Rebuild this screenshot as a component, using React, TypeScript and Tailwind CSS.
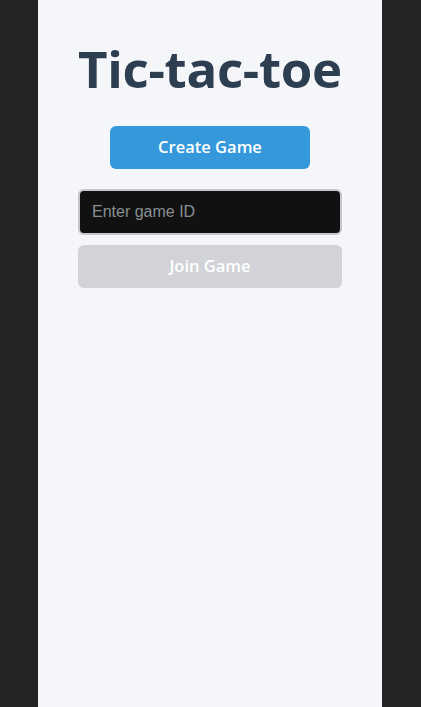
export default function App() {
  return (
    <div className="min-h-screen bg-[#242424] flex">
      <div
        className="ml-[38px] w-[344px] min-h-screen bg-[#f5f6fa] px-10 flex flex-col items-center"
        style={{ fontFamily: '"Open Sans", "Noto Sans", sans-serif' }}
      >
        <h1 className="mt-[38px] whitespace-nowrap text-[51px] leading-[60px] font-bold text-[#2c3e50] tracking-[-0.3px]">
          Tic-tac-toe
        </h1>
        <button className="mt-[28px] w-[200px] h-[43px] rounded-md bg-[#3498db] text-white text-[16.5px] font-semibold">
          Create Game
        </button>
        <input
          placeholder="Enter game ID"
          className="mt-5 w-full h-[46px] rounded-md border-2 border-[#c4c6cb] bg-[#111111] px-3 text-[16px] text-white placeholder:text-[#8a8f94] outline-none"
          style={{ fontFamily: '"Liberation Sans", Arial, sans-serif' }}
        />
        <button
          disabled
          className="mt-2.5 w-full h-[43px] rounded-md bg-[#d1d3d8] text-white text-[16.5px] font-semibold"
        >
          Join Game
        </button>
      </div>
    </div>
  );
}
